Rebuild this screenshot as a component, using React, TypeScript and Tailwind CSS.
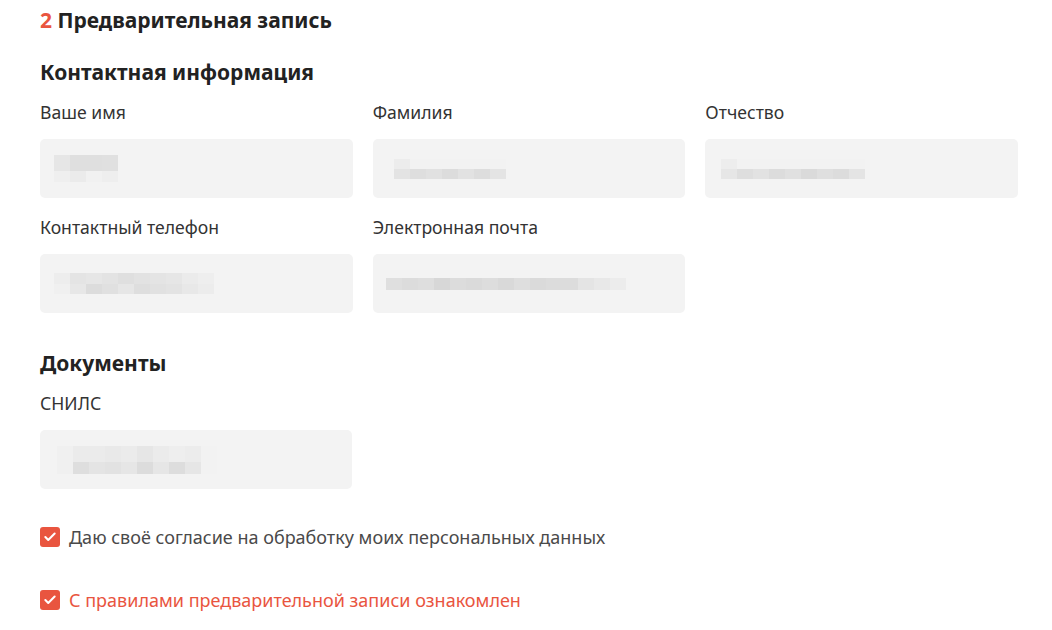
import { Check } from "lucide-react";

type Blur = { pad: string; rows: { h: string; cells: string[] }[] };

// pixelated (hidden) values, cell colours written out in full
const blurs: Record<string, Blur> = {
  name: {
    pad: "pl-[14px]",
    rows: [
      { h: "h-[16px]", cells: ["bg-[#e6e6e6]", "bg-[#dfdfdf]", "bg-[#dfdfdf]", "bg-[#e0e0e0]"] },
      { h: "h-[11px]", cells: ["bg-[#efefef]", "bg-[#ebebeb]", "bg-[#f1f1f1]", "bg-[#eeeeee]"] },
    ],
  },
  surname: {
    pad: "pl-[21px]",
    rows: [
      { h: "h-[10px]", cells: ["bg-[#ececec]", "bg-[#f2f2f2]", "bg-[#f2f2f2]", "bg-[#f2f2f2]", "bg-[#f2f2f2]", "bg-[#f2f2f2]", "bg-[#f2f2f2]"] },
      { h: "h-[10px]", cells: ["bg-[#e3e3e3]", "bg-[#dedede]", "bg-[#e1e1e1]", "bg-[#dcdcdc]", "bg-[#e2e2e2]", "bg-[#dddddd]", "bg-[#e4e4e4]"] },
    ],
  },
  patronymic: {
    pad: "pl-[16px]",
    rows: [
      { h: "h-[10px]", cells: ["bg-[#ededed]", "bg-[#f2f2f2]", "bg-[#f2f2f2]", "bg-[#f2f2f2]", "bg-[#f2f2f2]", "bg-[#f2f2f2]", "bg-[#f2f2f2]", "bg-[#f2f2f2]", "bg-[#f2f2f2]"] },
      { h: "h-[10px]", cells: ["bg-[#e6e6e6]", "bg-[#dedede]", "bg-[#e2e2e2]", "bg-[#dcdcdc]", "bg-[#e0e0e0]", "bg-[#dadada]", "bg-[#dfdfdf]", "bg-[#dcdcdc]", "bg-[#e4e4e4]"] },
    ],
  },
  phone: {
    pad: "pl-[14px]",
    rows: [
      { h: "h-[11px]", cells: ["bg-[#ededed]", "bg-[#e4e4e4]", "bg-[#e6e6e6]", "bg-[#e3e3e3]", "bg-[#dfdfdf]", "bg-[#e2e2e2]", "bg-[#e4e4e4]", "bg-[#e6e6e6]", "bg-[#ebebeb]", "bg-[#eeeeee]"] },
      { h: "h-[10px]", cells: ["bg-[#f0f0f0]", "bg-[#e7e7e7]", "bg-[#dcdcdc]", "bg-[#e0e0e0]", "bg-[#e6e6e6]", "bg-[#dedede]", "bg-[#e1e1e1]", "bg-[#e3e3e3]", "bg-[#e8e8e8]", "bg-[#ececec]"] },
    ],
  },
  email: {
    pad: "pl-[13px]",
    rows: [
      { h: "h-[12px]", cells: ["bg-[#dfdfdf]", "bg-[#dcdcdc]", "bg-[#dedede]", "bg-[#d7d7d7]", "bg-[#dcdcdc]", "bg-[#dadada]", "bg-[#dddddd]", "bg-[#d9d9d9]", "bg-[#dedede]", "bg-[#dadada]", "bg-[#dcdcdc]", "bg-[#dcdcdc]", "bg-[#e4e4e4]", "bg-[#e8e8e8]", "bg-[#ececec]"] },
    ],
  },
  snils: {
    pad: "pl-[17px]",
    rows: [
      { h: "h-[16px]", cells: ["bg-[#f0f0f0]", "bg-[#ebebeb]", "bg-[#ebebeb]", "bg-[#e9e9e9]", "bg-[#ebebeb]", "bg-[#e6e6e6]", "bg-[#ebebeb]", "bg-[#eeeeee]", "bg-[#ececec]", "bg-[#f2f2f2]"] },
      { h: "h-[12px]", cells: ["bg-[#f0f0f0]", "bg-[#dedede]", "bg-[#e4e4e4]", "bg-[#e2e2e2]", "bg-[#e6e6e6]", "bg-[#dcdcdc]", "bg-[#e6e6e6]", "bg-[#dddddd]", "bg-[#e6e6e6]", "bg-[#f2f2f2]"] },
    ],
  },
};

function Field({ label, blur }: { label: string; blur: keyof typeof blurs }) {
  const b = blurs[blur];
  return (
    <div className="flex flex-col">
      <label className="text-[17.6px] leading-[22px] text-[#333333] mb-[16px]">{label}</label>
      <div className={`h-[59px] rounded-[5px] bg-[#f3f3f3] flex flex-col justify-center ${b.pad}`}>
        {b.rows.map((row, i) => (
          <div key={i} className={`flex ${row.h}`}>
            {row.cells.map((c, j) => (
              <div key={j} className={`w-[16px] h-full ${c}`} />
            ))}
          </div>
        ))}
      </div>
    </div>
  );
}

function Agree({ text, red }: { text: string; red?: boolean }) {
  return (
    <label className="flex items-center gap-[9px]">
      <span className="w-[20px] h-[20px] rounded-[3px] bg-[#e9553f] flex items-center justify-center">
        <Check className="w-[14px] h-[14px] text-white" strokeWidth={3.5} />
      </span>
      <span className={`text-[18px] leading-[22px] ${red ? "text-[#e9553f]" : "text-[#4a4a4a]"}`}>
        {text}
      </span>
    </label>
  );
}

export default function App() {
  return (
    <main
      className="min-h-screen bg-white px-[40px] pt-[6px]"
      style={{ fontFamily: '"Noto Sans", "Open Sans", sans-serif' }}
    >
      <h1 className="text-[21px] leading-[28px] font-bold text-[#222222]">
        <span className="text-[#e9553f]">2</span> Предварительная запись
      </h1>

      <h2 className="mt-[23px] text-[21px] leading-[30px] font-bold text-[#222222]">
        Контактная информация
      </h2>

      <div className="mt-[14px] grid grid-cols-3 gap-x-[20px] gap-y-[18px] w-[978px]">
        <Field label="Ваше имя" blur="name" />
        <Field label="Фамилия" blur="surname" />
        <Field label="Отчество" blur="patronymic" />
        <Field label="Контактный телефон" blur="phone" />
        <Field label="Электронная почта" blur="email" />
      </div>

      <h2 className="mt-[35px] text-[21px] leading-[30px] font-bold text-[#222222]">Документы</h2>

      <div className="mt-[14px] w-[312px]">
        <Field label="СНИЛС" blur="snils" />
      </div>

      <div className="mt-[37px] flex flex-col gap-[41px]">
        <Agree text="Даю своё согласие на обработку моих персональных данных" />
        <Agree text="С правилами предварительной записи ознакомлен" red />
      </div>
    </main>
  );
}
